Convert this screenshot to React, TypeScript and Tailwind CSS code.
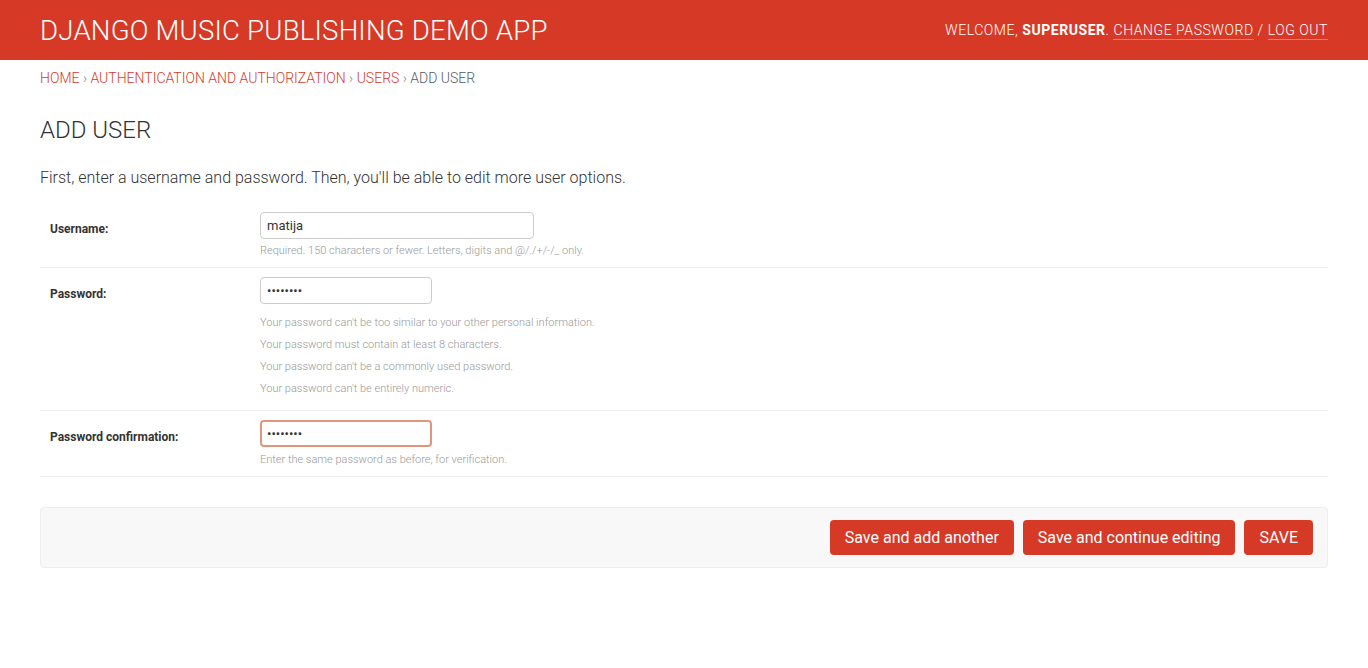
import React from 'react'

const font = { fontFamily: 'Roboto, "Liberation Sans", sans-serif' }

function HelpLine({ children }: { children: React.ReactNode }) {
  return <div className="text-[11px] leading-[22px] text-[#999] font-light">{children}</div>
}

function FormRow({
  label,
  children,
  pb,
}: {
  label: string
  children: React.ReactNode
  pb: string
}) {
  return (
    <div className={`flex border-b border-[#eee] pt-[9px] ${pb}`}>
      <label className="w-[220px] shrink-0 pl-[10px] pt-[7.5px] text-[12px] font-bold text-[#333]">
        {label}
      </label>
      <div className="flex flex-col">{children}</div>
    </div>
  )
}

export default function App() {
  return (
    <div className="min-h-[668px] bg-white text-[#333]" style={font}>
      <header className="h-[60px] bg-[#d63a27] flex items-center justify-between px-[40px]">
        <h1 className="text-[27.6px] font-light text-white tracking-[0.2px] pt-[1px]">
          DJANGO MUSIC PUBLISHING DEMO APP
        </h1>
        <div className="text-[14px] font-light text-white uppercase tracking-[0.55px] pt-[1px]">
          WELCOME, <strong className="font-bold">SUPERUSER</strong>.{' '}
          <a className="border-b border-[rgba(255,255,255,0.35)] pb-[1px]">CHANGE PASSWORD</a> /{' '}
          <a className="border-b border-[rgba(255,255,255,0.35)] pb-[1px]">LOG OUT</a>
        </div>
      </header>

      <nav className="px-[40px] pt-[8px] text-[14px] font-light uppercase text-[#555c63]">
        <a className="text-[#d63a27]">HOME</a>
        <span className="text-[#888]"> › </span>
        <a className="text-[#d63a27]">AUTHENTICATION AND AUTHORIZATION</a>
        <span className="text-[#888]"> › </span>
        <a className="text-[#d63a27]">USERS</a>
        <span className="text-[#888]"> › </span>
        ADD USER
      </nav>

      <main className="px-[40px] pt-[26px]">
        <h2 className="text-[24px] font-light text-[#333] leading-[30px]">ADD USER</h2>
        <p className="mt-[21px] text-[16px] font-light text-[#333]">
          First, enter a username and password. Then, you'll be able to edit more user options.
        </p>

        <div className="mt-[13px]">
          <FormRow label="Username:" pb="pb-[5px]">
            <input
              readOnly
              value="matija"
              className="w-[274px] h-[27px] border border-[#ccc] rounded-[4px] px-[6px] text-[13px] text-[#333] outline-none"
              style={font}
            />
            <div className="mt-[1px]">
              <HelpLine>Required. 150 characters or fewer. Letters, digits and @/./+/-/_ only.</HelpLine>
            </div>
          </FormRow>

          <FormRow label="Password:" pb="pb-[10px]">
            <input
              readOnly
              type="password"
              value="matija12"
              className="w-[172px] h-[27px] border border-[#ccc] rounded-[4px] px-[6px] text-[13px] text-[#333] outline-none"
              style={font}
            />
            <div className="mt-[8px]">
              <HelpLine>Your password can't be too similar to your other personal information.</HelpLine>
              <HelpLine>Your password must contain at least 8 characters.</HelpLine>
              <HelpLine>Your password can't be a commonly used password.</HelpLine>
              <HelpLine>Your password can't be entirely numeric.</HelpLine>
            </div>
          </FormRow>

          <FormRow label="Password confirmation:" pb="pb-[5px]">
            <input
              readOnly
              type="password"
              value="matija12"
              className="w-[172px] h-[27px] border-2 border-[#e3957c] rounded-[4px] px-[5px] text-[13px] text-[#333] outline-none"
              style={font}
            />
            <div className="mt-[2px]">
              <HelpLine>Enter the same password as before, for verification.</HelpLine>
            </div>
          </FormRow>
        </div>

        <div className="mt-[30px] h-[61px] bg-[#f8f8f8] border border-[#eee] rounded-[4px] flex items-center justify-end gap-[9px] px-[14px]">
          <button className="h-[35px] px-[15px] rounded-[4px] bg-[#d63a27] text-white text-[16px]">
            Save and add another
          </button>
          <button className="h-[35px] px-[15px] rounded-[4px] bg-[#d63a27] text-white text-[16px]">
            Save and continue editing
          </button>
          <button className="h-[35px] px-[15px] rounded-[4px] bg-[#d63a27] text-white text-[16px]">
            SAVE
          </button>
        </div>
      </main>
    </div>
  )
}
